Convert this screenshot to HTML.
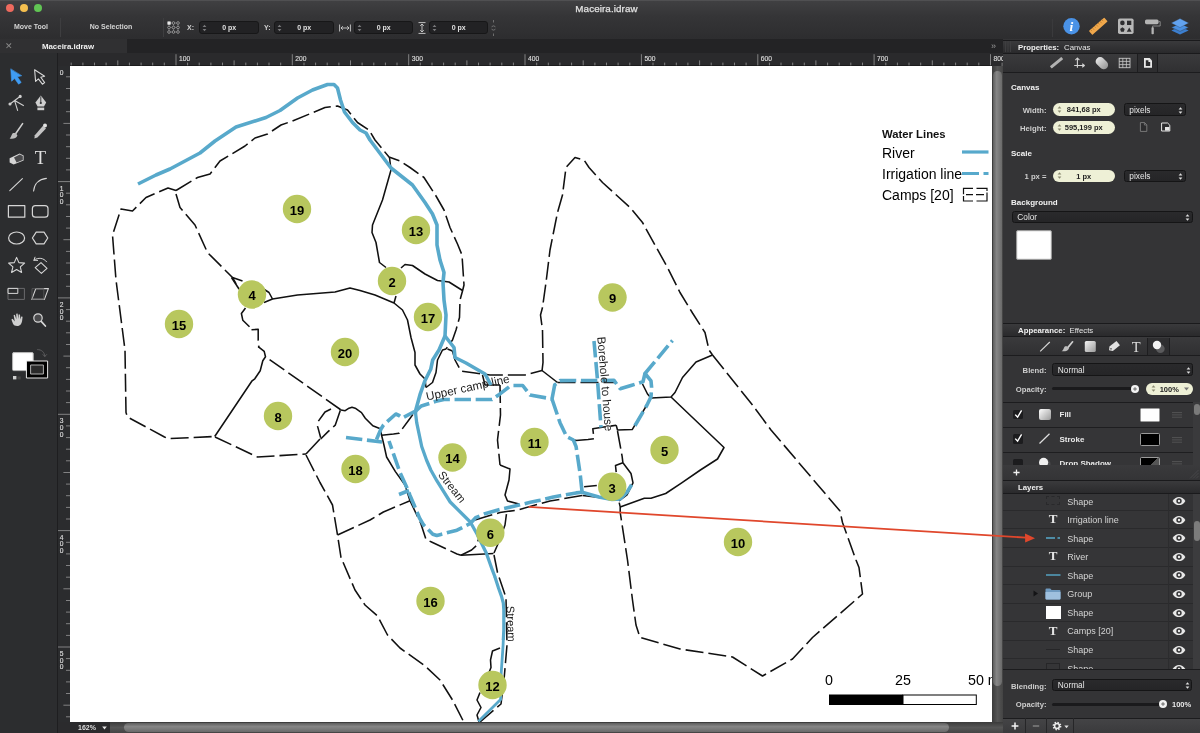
<!DOCTYPE html>
<html><head><meta charset="utf-8"><title>Maceira.idraw</title>
<style>
*{box-sizing:border-box;margin:0;padding:0}
html,body{width:1200px;height:733px;overflow:hidden;background:#2a2a2c}
body{font-family:"Liberation Sans",sans-serif;color:#e4e4e4;font-size:8px;position:relative}
.a{position:absolute}
#app{will-change:transform;position:absolute;left:0;top:0;width:1200px;height:733px;overflow:hidden;background:#2b2b2d}
/* title + toolbar */
#title{left:0;top:0;width:1200px;height:16px;background:linear-gradient(#404042,#353537);border-top:.6px solid #505052}
#title .t{left:0;width:1200px;top:2.3px;text-align:center;font-size:9.8px;color:#e2e2e2;letter-spacing:.1px;padding-left:13px;-webkit-text-stroke:.25px #e2e2e2}
.tl{width:8.6px;height:8.6px;border-radius:50%;top:2.9px}
#tool{left:0;top:16px;width:1200px;height:23px;background:linear-gradient(#353537,#2d2d2f)}
.tb{font-weight:bold;font-size:7px;color:#d4d4d4;top:7.2px;text-align:center;letter-spacing:0}
.sep{width:1px;background:#3e3e40;top:2px;height:19px}
.inp{top:5px;height:12.5px;width:59.5px;background:#222224;border-radius:3px;border:.5px solid #171718}
.inp span{position:absolute;left:0;right:0;top:2.2px;text-align:center;font-weight:bold;font-size:7px;color:#e0e0e0;padding-left:1px}
.inp svg{position:absolute;left:2.2px;top:2.3px}
.lbl{font-weight:bold;font-size:7px;color:#d0d0d0;top:7.5px}
#tabs{left:0;top:39px;width:1003px;height:14px;background:#232325}
#tab1{left:0;top:0;width:127px;height:14px;background:#303032}
#tab1 .x{left:5px;top:2.2px;font-size:9px;color:#8a8a8a}
#tab1 .n{left:0;width:136px;top:2.6px;text-align:center;font-weight:bold;font-size:7.9px;color:#f0f0f0}
/* left toolbar */
#left{left:0;top:53px;width:57px;height:680px;background:#2c2d2f}
/* rulers */
.hr{position:absolute;left:57px;top:53px;background:#2a2a2c}
.vr{position:absolute;left:57px;top:66px;background:#2b2c2e}
.hr text,.vr text{font-family:"Liberation Sans",sans-serif;font-size:13.4px;fill:#dcdcdc;stroke:#dcdcdc;stroke-width:.3}
#corner{left:57px;top:53px;width:13px;height:13px;background:#2a2a2c}
/* canvas */
#canvas{left:70px;top:66px;width:922px;height:656px;background:#fff;overflow:hidden;box-shadow:0 -.6px 0 #141414}
.map{position:absolute;left:0;top:0}
.map path{fill:none}
.bk path{stroke:#111;stroke-width:1.55;stroke-linejoin:round}
.bk .d{stroke-dasharray:18 5}
.bl path{stroke:#58a9cb;stroke-width:3.6;stroke-linejoin:round}
.bl .st{stroke-width:3.3}
.bl .st2{stroke-width:3.2}
.bl .st3{stroke-width:2.8}
.bl .i{stroke-dasharray:16.4 4.7}
.map text{font-family:"Liberation Sans",sans-serif;fill:#000}
.map .n{font-weight:bold;font-size:13px;text-anchor:middle}
.map .lb{fill:#1c1c1c}
.map .lt{font-size:11.3px;font-weight:bold;fill:#111}
.map .lg{font-size:14px}
.map .sc{font-size:14.3px}
/* scrollbars */
#vs{left:992px;top:66px;width:11px;height:656px;background:linear-gradient(90deg,#3a3a3a,#555 50%,#444)}
#vs i{position:absolute;left:1.2px;top:5px;width:9px;height:615px;border-radius:4.5px;background:linear-gradient(90deg,#5e5e5e,#868686 40%,#6a6a6a)}
#hs{left:70px;top:722px;width:933px;height:11px;background:linear-gradient(#3a3a3a,#555 50%,#444)}
#hs i{position:absolute;left:54px;top:1.2px;width:825px;height:9px;border-radius:4.5px;background:linear-gradient(#5e5e5e,#868686 40%,#6a6a6a)}
#zoom{left:70px;top:722px;width:40px;height:11px;background:#2b2b2d;font-size:7px;color:#ddd;font-weight:bold}
#zoom span{position:absolute;left:8px;top:1.5px}
/* right panel */
#right{left:1003px;top:39px;width:197px;height:694px;background:#2d2d2f}
.hd{left:0;width:197px;height:13px;background:linear-gradient(#3a3a3c,#2a2a2c);border-top:.5px solid #1a1a1c;border-bottom:.5px solid #1a1a1c}
.hd b{position:absolute;left:15px;top:2.3px;font-size:7.8px;color:#f0f0f0}
.hd span{position:absolute;top:2.3px;font-size:7.8px;color:#e6e6e6}
.ic{left:0;width:197px;height:19px;background:linear-gradient(#3a3a3c,#303032);border-bottom:.5px solid #1c1c1e}
.h2{font-weight:bold;font-size:8px;color:#f2f2f2}
.l{font-size:7.7px;font-weight:bold;color:#cdcdcd;text-align:right;width:43px}
.pill{height:12.5px;border-radius:6.5px;background:#eef0d6;color:#222;font-size:7.5px;text-align:center;font-weight:bold}
.pill span{position:absolute;left:0;right:0;top:2.2px}
.sel{height:12.5px;border-radius:2.5px;background:linear-gradient(#2a2a2c,#252527);border:.5px solid #151516;color:#e6e6e6;font-size:7.5px}
.sel span{position:absolute;left:4.8px;top:.9px;font-size:8.3px}
.row{left:0;width:186px;border-bottom:.5px solid #1e1e20;background:#2f2f31}
.ly{left:0;width:190px;height:18.6px;border-bottom:.6px solid #2a2a2c}
.ly span{position:absolute;left:64.2px;top:4.3px;font-size:9px;color:#d4d4d4}
.knob{width:8px;height:8px;border-radius:50%;background:radial-gradient(circle,#8a8a8a 0 1.4px,#f2f2f2 1.8px)}
</style></head>
<body>
<div id="app">
 <div id="title" class="a">
  <div class="a tl" style="left:5.5px;background:#ee6a5e"></div>
  <div class="a tl" style="left:19.5px;background:#f5bf4f"></div>
  <div class="a tl" style="left:33.5px;background:#61c554"></div>
  <div class="a t">Maceira.idraw</div>
 </div>
 <div id="tool" class="a">
  <div class="a tb" style="left:1px;width:60px">Move Tool</div>
  <div class="a sep" style="left:60px"></div>
  <div class="a tb" style="left:61px;width:100px">No Selection</div>
  <div class="a sep" style="left:163px"></div>
  <svg class="a" style="left:166.5px;top:4.5px" width="13" height="13" viewBox="0 0 13 13" fill="none" stroke="#c4c4c4" stroke-width=".6"><path d="M2 2H11V11H2ZM2 6.5H11M6.5 2V11" stroke="#7a7a7c"/><rect x=".8" y=".8" width="2.6" height="2.6" fill="#e8e8e8" stroke="#e8e8e8"/><circle cx="6.5" cy="2" r="1.35" fill="#303032"/><circle cx="11" cy="2" r="1.35" fill="#303032"/><circle cx="2" cy="6.5" r="1.35" fill="#303032"/><circle cx="6.5" cy="6.5" r="1.35" fill="#303032"/><circle cx="11" cy="6.5" r="1.35" fill="#303032"/><circle cx="2" cy="11" r="1.35" fill="#303032"/><circle cx="6.5" cy="11" r="1.35" fill="#303032"/><circle cx="11" cy="11" r="1.35" fill="#303032"/></svg>
<div class="a lbl" style="left:187px">X:</div>
<div class="a inp" style="left:199px"><svg width="5" height="8" viewBox="0 0 5 8"><path d="M.6 3L2.5 .8L4.4 3ZM.6 5L2.5 7.2L4.4 5Z" fill="#7a7a7c"/></svg><span>0 px</span></div>
<div class="a lbl" style="left:264px">Y:</div>
<div class="a inp" style="left:274px"><svg width="5" height="8" viewBox="0 0 5 8"><path d="M.6 3L2.5 .8L4.4 3ZM.6 5L2.5 7.2L4.4 5Z" fill="#7a7a7c"/></svg><span>0 px</span></div>
<svg class="a" style="left:338.5px;top:7.5px" width="12" height="8" viewBox="0 0 12 8" fill="none" stroke="#cfcfcf" stroke-width=".9"><path d="M.6 .5V7.5M11.4 .5V7.5M2 4H10M3.8 2.2L2 4L3.8 5.8M8.2 2.2L10 4L8.2 5.8"/></svg>
<div class="a inp" style="left:353.5px"><svg width="5" height="8" viewBox="0 0 5 8"><path d="M.6 3L2.5 .8L4.4 3ZM.6 5L2.5 7.2L4.4 5Z" fill="#7a7a7c"/></svg><span>0 px</span></div>
<svg class="a" style="left:418px;top:5.5px" width="8" height="12" viewBox="0 0 8 12" fill="none" stroke="#cfcfcf" stroke-width=".9"><path d="M.5 .6H7.5M.5 11.4H7.5M4 2V10M2.2 3.8L4 2L5.8 3.8M2.2 8.2L4 10L5.8 8.2"/></svg>
<div class="a inp" style="left:428.5px"><svg width="5" height="8" viewBox="0 0 5 8"><path d="M.6 3L2.5 .8L4.4 3ZM.6 5L2.5 7.2L4.4 5Z" fill="#7a7a7c"/></svg><span>0 px</span></div>
<svg class="a" style="left:490.5px;top:3.5px" width="5" height="16" viewBox="0 0 5 16" fill="none" stroke="#8a8a8a" stroke-width=".7"><path d="M2.5 0V2.5M2.5 13.5V16M.8 7.2C.8 5.4 4.2 5.4 4.2 7.2M.8 8.8C.8 10.6 4.2 10.6 4.2 8.8"/></svg>
<div class="a sep" style="left:1052px;top:3px;height:18px;background:#3a3a3c"></div>
<svg class="a" style="left:1060px;top:0" width="140" height="23" viewBox="1060 16 140 23">
<circle cx="1071.5" cy="26.3" r="8.2" fill="#4a92e6"/>
<text x="1071.3" y="31.2" text-anchor="middle" font-family="Liberation Serif,serif" font-style="italic" font-weight="bold" font-size="13.5" fill="#fff">i</text>
<g transform="translate(1098.3,26.2) rotate(-41.5)"><rect x="-10.2" y="-2.6" width="20.4" height="5.2" rx=".6" fill="#f0a84c"/><path d="M-8 -2.6V-.6M-5.5 -2.6V0M-3 -2.6V-.6M-.5 -2.6V0M2 -2.6V-.6M4.5 -2.6V0M7 -2.6V-.6" stroke="#c07a28" stroke-width=".7"/></g>
<rect x="1118" y="18.5" width="15.6" height="15.6" rx="1.8" fill="#b8b8b8"/>
<circle cx="1122.4" cy="22.9" r="2.3" fill="#2e2e30"/><rect x="1127" y="20.7" width="4.3" height="4.3" fill="#2e2e30"/>
<path d="M1122.4 27.2L1124.7 28.9L1123.8 31.7H1121L1120.1 28.9Z" fill="#2e2e30"/><path d="M1129.2 27.4L1131.6 31.7H1126.8Z" fill="#2e2e30"/>
<rect x="1145" y="19.4" width="13.6" height="4.8" rx="1.6" fill="#b4b4b4"/><path d="M1158.6 21.6H1160.2V26H1152.6V28" stroke="#8e8e8e" stroke-width=".9" fill="none"/><rect x="1151.5" y="27.2" width="2.3" height="7" rx=".8" fill="#b4b4b4"/>
<path d="M1180 26.6L1188.6 30.6L1180 34.6L1171.4 30.6Z" fill="#3c7fd0"/>
<path d="M1180 23.4L1188.6 27.4L1180 31.4L1171.4 27.4Z" fill="#4a90e2" stroke="#2f2f31" stroke-width=".4"/>
<path d="M1180 18.6L1188.8 23L1180 27.6L1171.2 23Z" fill="#62a2ee" stroke="#2f2f31" stroke-width=".3"/>
</svg>


 </div>
 <div id="tabs" class="a">
  <div id="tab1" class="a"><div class="a x">✕</div><div class="a n">Maceira.idraw</div></div>
  <div class="a" style="left:991px;top:1.5px;font-size:9px;color:#9a9a9a">»</div>
 </div>
 <div id="left" class="a">
 <svg class="a" style="left:0;top:0" width="57" height="680" viewBox="0 53 57 680" fill="none" stroke-linejoin="round" stroke-linecap="round">
<!-- row1 arrows -->
<path d="M10.8 69.2L11.6 81.2L14.6 78.6L18.6 84.2L21.2 82.4L17.4 76.8L21.4 75.8Z" fill="#3f9cf4" stroke="#3f9cf4" stroke-width=".6"/>
<path d="M34.6 69.8L35.6 81.4L38.4 78.8L42.4 84.2L44.6 82.6L40.8 77.2L44.6 76.2Z" fill="#2a2b2d" stroke="#d8d8d8" stroke-width="1.1"/>
<!-- row2 -->
<g stroke="#cfcfcf" stroke-width="1.1"><path d="M10 104L20 96.5M14.6 100.6L17.6 110.4M14.6 100.6L23.4 105.6"/><circle cx="10" cy="104" r="1" fill="#cfcfcf"/><circle cx="20.2" cy="96.4" r="1" fill="#cfcfcf"/></g>
<path d="M40.8 95.6L46.2 102.4L44 106.6H37.6L35.4 102.4Z" fill="#cfcfcf"/><path d="M40.8 96.8V102.2" stroke="#2a2b2d" stroke-width=".9"/><circle cx="40.8" cy="103" r="1.1" fill="#2a2b2d"/><rect x="37.4" y="107.6" width="6.8" height="2.6" fill="#cfcfcf"/>
<!-- row3 brush/pencil -->
<path d="M22.6 123.6L15.6 133.8" stroke="#cfcfcf" stroke-width="1.6"/><path d="M15.8 133L17.4 135.4C16.4 138.2 13 139.2 9.6 138.4C11.4 137.2 11.6 134 13 133Z" fill="#bdbdbd"/>
<path d="M43 125.8L46 128.4L37.4 137.6L34.4 138.6L34.8 135.2Z" fill="#c4c4c4"/><circle cx="45" cy="125.6" r="2" fill="#e2e2e2"/>
<!-- row4 eraser / T -->
<path d="M9.6 158.2L19.6 153.6L23.6 155.6V160.4L13.6 164.6L9.6 162.6Z" fill="#d6d6d6"/><path d="M14 157.6L19.8 154.6L22.8 156V160L16.6 162.6Z" fill="#4a4a4c"/>
<text x="40.4" y="164.2" text-anchor="middle" font-family="Liberation Serif,serif" font-size="18.5" fill="#e0e0e0" stroke="none">T</text>
<!-- row5 line / arc -->
<path d="M9.8 190.6L22.4 178.6" stroke="#d6d6d6" stroke-width="1.1"/>
<path d="M33.6 191C34.2 184 39 179.2 46.4 178.4" stroke="#d6d6d6" stroke-width="1.1"/>
<!-- row6 rect / rrect -->
<rect x="8.4" y="205.6" width="16.4" height="11.6" stroke="#d6d6d6" stroke-width="1.2"/>
<rect x="32.4" y="205.6" width="15.6" height="11.6" rx="3" stroke="#d6d6d6" stroke-width="1.2"/>
<!-- row7 ellipse / hexagon -->
<ellipse cx="16.6" cy="238" rx="8" ry="6" stroke="#d6d6d6" stroke-width="1.2"/>
<path d="M32.4 238L36.2 232.2H44L47.8 238L44 243.8H36.2Z" stroke="#d6d6d6" stroke-width="1.2"/>
<!-- row8 star / rotate -->
<path d="M16.6 257.4L18.9 262.6L24.6 263.1L20.3 266.9L21.6 272.4L16.6 269.5L11.6 272.4L12.9 266.9L8.6 263.1L14.3 262.6Z" stroke="#d6d6d6" stroke-width="1.1"/>
<path d="M35.2 267.6L41 262.6L47 268.4L41.4 273.4Z" stroke="#d6d6d6" stroke-width="1.1"/><path d="M34.2 260C38.4 257.2 43.6 257.8 46.6 261.8M34 260.2L37.6 260.4M34 260.2L35 257.2" stroke="#d6d6d6" stroke-width="1"/>
<!-- row9 -->
<rect x="8.4" y="288.4" width="16" height="11" stroke="#6a6a6c" stroke-width="1"/><rect x="8.4" y="288.4" width="9.4" height="5" stroke="#d6d6d6" stroke-width="1"/>
<path d="M31.8 299.4H44.4L48.4 288.6H35.8Z" stroke="#d6d6d6" stroke-width="1.1"/><rect x="32.4" y="288.6" width="11.4" height="10.8" stroke="#5a5a5c" stroke-width=".8"/>
<!-- row10 hand / zoom -->
<path d="M11.4 319.4L13 323.8C13.8 325.4 15 326 17.2 326C20.4 326 21.8 323.6 22.2 320.2L22.6 316.8L21.2 316.6L20.4 319.6L20 314.4L18.6 314.4L18.4 319L17.6 313.6L16.2 313.8L16.4 319.2L14.8 314.8L13.6 315.2L14.8 321.6L12.6 318.8Z" fill="#cfcfcf"/>
<circle cx="38" cy="318" r="4.2" stroke="#d6d6d6" stroke-width="1.2" fill="#4a4a4c"/><path d="M41.2 321.4L45.4 326" stroke="#d6d6d6" stroke-width="1.7"/>
<!-- colors -->
<rect x="12.6" y="352.6" width="20.6" height="18" rx="1" fill="#fff" stroke="#b9b9b9" stroke-width="1"/>
<rect x="26.8" y="361" width="20.8" height="17" fill="#000" stroke="#e6e6e6" stroke-width="1"/>
<rect x="31" y="365" width="12.4" height="9" fill="#2a2a2a" stroke="#b0b0b0" stroke-width="1"/>
<path d="M37.6 349.6C41.6 349.6 44.4 352 44.8 356M44.8 356.4L43 354.6M44.8 356.4L46.6 354.6" stroke="#5c5c5e" stroke-width="1"/>
<rect x="13" y="376" width="3.4" height="3.4" fill="#d0d0d0"/><rect x="17.4" y="376.4" width="3.4" height="3" fill="#444"/>
</svg>

 </div>
 <div id="corner" class="a"></div>
 <div class="a" style="left:56.6px;top:53px;width:.8px;height:680px;background:#1e1e20;z-index:2"></div>
 <svg class="hr" width="946" height="13" viewBox="57 53 946 13">
<path d="M176.0 54.2V66M292.3 54.2V66M408.7 54.2V66M525.0 54.2V66M641.4 54.2V66M757.8 54.2V66M874.1 54.2V66M990.5 54.2V66M117.8 60.4V66M234.1 60.4V66M350.5 60.4V66M466.9 60.4V66M583.2 60.4V66M699.6 60.4V66M815.9 60.4V66M932.3 60.4V66M71.2 62.6V66M82.9 62.6V66M94.5 62.6V66M106.1 62.6V66M129.4 62.6V66M141.1 62.6V66M152.7 62.6V66M164.3 62.6V66M187.6 62.6V66M199.2 62.6V66M210.9 62.6V66M222.5 62.6V66M245.8 62.6V66M257.4 62.6V66M269.0 62.6V66M280.7 62.6V66M304.0 62.6V66M315.6 62.6V66M327.2 62.6V66M338.9 62.6V66M362.1 62.6V66M373.8 62.6V66M385.4 62.6V66M397.0 62.6V66M420.3 62.6V66M432.0 62.6V66M443.6 62.6V66M455.2 62.6V66M478.5 62.6V66M490.1 62.6V66M501.8 62.6V66M513.4 62.6V66M536.7 62.6V66M548.3 62.6V66M559.9 62.6V66M571.6 62.6V66M594.9 62.6V66M606.5 62.6V66M618.1 62.6V66M629.8 62.6V66M653.0 62.6V66M664.7 62.6V66M676.3 62.6V66M687.9 62.6V66M711.2 62.6V66M722.9 62.6V66M734.5 62.6V66M746.1 62.6V66M769.4 62.6V66M781.0 62.6V66M792.7 62.6V66M804.3 62.6V66M827.6 62.6V66M839.2 62.6V66M850.8 62.6V66M862.5 62.6V66M885.8 62.6V66M897.4 62.6V66M909.0 62.6V66M920.7 62.6V66M943.9 62.6V66M955.6 62.6V66M967.2 62.6V66M978.8 62.6V66M1002.1 62.6V66" stroke="#a8a8a8" stroke-width="0.7" fill="none"/>
<text transform="translate(179.0,60.5) scale(.5)">100</text>
<text transform="translate(295.3,60.5) scale(.5)">200</text>
<text transform="translate(411.7,60.5) scale(.5)">300</text>
<text transform="translate(528.0,60.5) scale(.5)">400</text>
<text transform="translate(644.4,60.5) scale(.5)">500</text>
<text transform="translate(760.8,60.5) scale(.5)">600</text>
<text transform="translate(877.1,60.5) scale(.5)">700</text>
<text transform="translate(993.5,60.5) scale(.5)">800</text>
</svg>
 <svg class="vr" width="13" height="656" viewBox="57 66 13 656">
<path d="M66 76.8H70M66 88.5H70M66 100.1H70M66 111.7H70M63.4 123.4H70M66 135.0H70M66 146.7H70M66 158.3H70M66 169.9H70M57 181.6H70M66 193.2H70M66 204.8H70M66 216.5H70M66 228.1H70M63.4 239.7H70M66 251.4H70M66 263.0H70M66 274.6H70M66 286.3H70M57 297.9H70M66 309.6H70M66 321.2H70M66 332.8H70M66 344.5H70M63.4 356.1H70M66 367.7H70M66 379.4H70M66 391.0H70M66 402.6H70M57 414.3H70M66 425.9H70M66 437.6H70M66 449.2H70M66 460.8H70M63.4 472.5H70M66 484.1H70M66 495.7H70M66 507.4H70M66 519.0H70M57 530.6H70M66 542.3H70M66 553.9H70M66 565.5H70M66 577.2H70M63.4 588.8H70M66 600.5H70M66 612.1H70M66 623.7H70M66 635.4H70M57 647.0H70M66 658.6H70M66 670.3H70M66 681.9H70M66 693.5H70M63.4 705.2H70M66 716.8H70" stroke="#a8a8a8" stroke-width="0.7" fill="none"/>
<text transform="translate(61.6,75.0) scale(.5)" text-anchor="middle">0</text>
<text transform="translate(61.6,190.6) scale(.5)" text-anchor="middle">1</text>
<text transform="translate(61.6,197.2) scale(.5)" text-anchor="middle">0</text>
<text transform="translate(61.6,203.8) scale(.5)" text-anchor="middle">0</text>
<text transform="translate(61.6,306.9) scale(.5)" text-anchor="middle">2</text>
<text transform="translate(61.6,313.5) scale(.5)" text-anchor="middle">0</text>
<text transform="translate(61.6,320.1) scale(.5)" text-anchor="middle">0</text>
<text transform="translate(61.6,423.3) scale(.5)" text-anchor="middle">3</text>
<text transform="translate(61.6,429.9) scale(.5)" text-anchor="middle">0</text>
<text transform="translate(61.6,436.5) scale(.5)" text-anchor="middle">0</text>
<text transform="translate(61.6,539.6) scale(.5)" text-anchor="middle">4</text>
<text transform="translate(61.6,546.2) scale(.5)" text-anchor="middle">0</text>
<text transform="translate(61.6,552.8) scale(.5)" text-anchor="middle">0</text>
<text transform="translate(61.6,656.0) scale(.5)" text-anchor="middle">5</text>
<text transform="translate(61.6,662.6) scale(.5)" text-anchor="middle">0</text>
<text transform="translate(61.6,669.2) scale(.5)" text-anchor="middle">0</text>
</svg>
 <div id="canvas" class="a">
 <svg class="map" width="922" height="656" viewBox="70 66 922 656">
<g class="bk">
<path class="s" d="M232.5 277.5 L242.5 281"/>
<path class="s" d="M262 288 L269 292.5 L272.5 299"/>
<path class="s" d="M264 302.5 L272.5 299 L297.5 295 L335 292 L350 288 L360 290.5 L375 295 L394 303 L402.5 310 L407.5 320 L411 337.5 L415 352.5 L415 365 L420 374 L425 379 L426 387.5"/>
<path class="s" d="M394 303 L396 296"/>
<path class="s" d="M214.7 436.5 L252.1 380.8 L254.8 378.8 L260.2 370.7 L262.8 360.7 L265.5 356.7 L264.2 351.4 L258.2 346.7"/>
<path class="s" d="M245.5 308 L241.4 313.5 L242.8 320.2 L249.5 326.8"/>
<path class="s" d="M231.5 277.5 L239 289"/>
<path class="s" d="M339.5 409.8 L345.2 410.7 L349 408.2 L352 407.3 L355.2 408.2 L361.5 412.6 L365.3 418.2 L372.8 425.8 L380.3 428.7 L381.6 435.2 L384 445.2 L386.6 457 L395.4 471.6 L405 485 L410 500.7"/>
<path class="s" d="M306 454 L320 439"/>
<path class="s" d="M389.5 157.5 L391 170 L382.5 200 L372.5 225 L372 232.5 L376 242.5 L379.5 262.5 L386 267.5"/>
<path class="s" d="M401 268 L405 264.5 L412.5 265.5 L425 274 L437.5 280.5 L449 282 L462.5 290.5"/>
<path class="s" d="M446 349 L442.5 350 L437.5 360 L436 372.5 L432.5 382.5 L426 387.5"/>
<path class="s" d="M447.5 349 L452.5 351"/>
<path class="s" d="M482.5 375 L485 385 L500 385"/>
<path class="s" d="M542 370.5 L557.5 382.5"/>
<path class="s" d="M500 465 L510 469 L509 480 L505 495 L507.5 501 L519 504"/>
<path class="s" d="M461 555.3 L493.5 553.5"/>
<path class="s" d="M500 648 L492.5 651 L490.5 660 L491 667.5 L489 672.5"/>
<path class="s" d="M480 692.5 L477 700 L481 707.5 L477 715 L479 722"/>
<path class="s" d="M712.5 355 L696 362 L682.5 377.5 L675 392.5 L671 397 L651 398"/>
<path class="s" d="M671 397 L724 447.5 L717.5 459 L700.4 470 L681.7 482.8 L665.7 493.5 L651 498.2 L644.3 498.2 L620.2 506.9"/>
<path class="s" d="M642.5 384 L647.5 394 L651 398 L632.2 429.6 L617.5 430 L616.2 425.3"/>
<path class="s" d="M571 439 L576 440.5"/>
<path class="s" d="M622.9 462.8 L615.5 465.5 L616.2 472.1"/>
<path class="s" d="M622.9 462.8 L631 473.5 L633 482.8 L627 494.9 L618.9 500.9"/>
<path class="s" d="M584.1 486.8 L596.8 485.5"/>
<path class="s" d="M582.5 495.5 L600 497.5"/>
<path class="d" d="M176 190.5 L197.5 177.5 L210 174 L220 161 L245 146 L255 138 L267.5 134 L281 125 L292.5 121 L325 107.5 L337.5 106 L347.5 110 L357.5 122.5 L369 130 L375 140 L389 157 L400 161 L410 167.5 L424 177.5 L436 196 L444 210 L450 227.5 L457.5 244 L462 255 L464 285 L462.5 291 L460 300 L459.5 317.5 L456 330 L452.5 340 L446 349"/>
<path class="d" d="M176 190.5 L168 188 L146 197.5 L132.5 211 L121 209 L112.5 235 L116 280 L125 350 L126 412.5 L127.5 417 L164.5 437 L168 438.6 L214.7 436.5"/>
<path class="d" d="M176 194 L180 207.5 L195 225 L207.5 252.5 L232.5 277.5 L239 289"/>
<path class="d" d="M251.5 329.8 L258.2 329.3 L258.2 340.2 L258.8 347.6"/>
<path class="d" d="M265.5 356.7 L340.4 409.5" stroke-dashoffset="18"/>
<path class="d" d="M215 437 L257.5 457 L306 454"/>
<path class="d" d="M331 409 L325 412 L318.2 421.4 L317.6 426.4 L320.7 437.7"/>
<path class="d" d="M340.2 410.7 L335.2 425.2 L328.3 431.4 L320.7 439"/>
<path class="d" d="M306 455 L320 482.5 L332.5 505 L337.5 535 L341 557.5 L355 590 L365 605 L377.5 616 L387.5 635 L400 648 L425 666 L440 680 L452.5 700 L464 722.5"/>
<path class="d" d="M337.5 535 L370 520 L383.4 512 L410 500.7"/>
<path class="d" d="M381.6 435.2 L393.5 434 L399 433.3 L409.2 419.5 L415.5 411"/>
<path class="d" d="M410 500.7 L420.8 523.5 L426 539.5 L431.5 542 L457 554 L461 555.3"/>
<path class="d" d="M461 555.3 L471.6 550 L477 545 L478.3 539.5"/>
<path class="d" d="M494 553 L497.5 545 L505 525 L507 510"/>
<path class="d" d="M494 555 L497.5 572.5 L506 597.5 L507 645 L504 680 L501 704 L480 722"/>
<path class="d" d="M475 520 L500 512.5 L517.5 510 L550 501 L582.5 495.5"/>
<path class="d" d="M452.5 351 L455 360 L461 371 L475 373 L490 375 L525 375 L542 370.5"/>
<path class="d" d="M500 385 L500.5 415 L497.5 440 L500 465"/>
<path class="d" d="M557.5 382.5 L615 382.5"/>
<path class="d" d="M576 440.5 L588 439.4 L594 438.7 L592.8 428.7 L616.2 425.3"/>
<path class="d" d="M617.5 431 L622.2 456.8 L622.9 462.8"/>
<path class="d" d="M542 371 L543 362.5 L542.5 330 L540.5 315 L542.5 307.5 L546 282.5 L550 250 L555 225 L557.5 212.5 L562.5 195 L566 167.5 L575 157.5 L584 160 L589 167.5 L602.5 182.5 L630 207.5 L642.5 222.5 L655 245 L667.5 267.5 L680 292.5 L692.5 313 L705 332.5 L709 350 L712.5 355"/>
<path class="d" d="M712.5 355 L752.5 405 L771 430 L840 511 L842.5 522.5 L856 560 L859 567.5 L862.5 594 L812.5 637.5 L792.5 659 L762.5 676 L732.5 657 L680 649 L640 637.5 L636 625 L632.5 600 L627.5 560 L620.2 512.5 L620.2 506.9 L618.9 501.5"/>
</g>
<g class="bl">
<path class="r" d="M138 184 L156 175 L170 169 L200 153 L215 141 L236 127 L266 117.5 L280 110.5 L297.5 98 L312.5 90 L327.5 84.5 L334 84.5 L337.5 88 L340.5 100 L344.5 112 L352.5 122.5 L360 130 L366 133 L370 140 L391 168 L412.5 185 L425 202.5 L432.5 214 L437 225 L437 245 L440 260 L444 272.5 L443 282.5 L444 300 L446 315 L445 336"/>
<path class="r" d="M445 336 L439 350 L432.7 360 L430.7 369.3 L424.7 381.3 L420 394.7 L416 409.3 L415.3 413.3"/>
<path class="r" d="M445 336 L454 347.5 L455 357.5 L466 363 L485 374 L491 385"/>
<path class="st" d="M415.3 411 L416.7 422.6 L421.7 446.5 L426.5 460 L430.8 470 L436.8 480.7 L450.2 502 L470.3 522 L477 534 L486.3 553 L491.6 568 L495 577"/>
<path class="st2" d="M494.8 576.5 L498.5 588 L501.5 596.4 L503.3 603 L503.8 610 L503.8 630 L503.3 640"/>
<path class="st3" d="M503.4 638 L503.1 645 L501.2 673 L500.6 699.6 L478.4 721.4"/>
<path class="i" d="M415.3 411.3 L421.3 406 L436 401.3 L444 399.5 L492 399.5 L499.3 394.4 L509.3 386.7 L513.3 385.5 L522.7 385.5 L530 395 L550.7 398.7 L552 399"/>
<path class="i" d="M552 399 L554.7 384.8 L557.4 383.2 L560 380.6 L614 380.4 L620.2 388.8 L631 385.5 L643 381.7 L645 373.5"/>
<path class="i" d="M644.2 374.5 L672.5 340.5"/>
<path class="i" d="M645 373.5 L651 380.8 L651.6 387.5 L651 396.8 L647 405 L633.6 428"/>
<path class="i" d="M552 399 L560 422.7 L566.7 436.7 L573.4 440 L576.1 446.7 L580.1 473.5 L582.1 492.3"/>
<path class="i" d="M582.1 492.3 L576.1 492.9 L553.4 496.9 L540 500.2 L530.4 502.3 L517 505.6 L497 510.2 L485 513.7 L475.6 517.7 L470.3 523.5 L457 530.2 L440.8 534.4 L436.8 535.5 L432.8 534.2 L423.5 524.8 L419.5 518 L414 504.8 L410 495.4 L407.4 488.7 L400 472.5 L389 441"/>
<path class="i" d="M346 437.5 L382 442"/>
<path class="i" d="M376.5 439.5 L381 429 L383.5 425 L395.8 414 L399 415.5 L402.5 418 L415.5 411"/>
<path class="i" d="M399 494.5 L409 490.5"/>
<path class="i" d="M594 341 L597.5 380 L601 427.5"/>
<path class="r" d="M582.1 492.3 L598.8 496.9 L612 499.5 L620.2 498.9 L627 492.2 L631.6 484.8"/>
</g>
<circle cx="297" cy="209" r="14.2" fill="#b8c75e"/>
<text class="n" x="297" y="214.7">19</text>
<circle cx="416" cy="230" r="14.2" fill="#b8c75e"/>
<text class="n" x="416" y="235.7">13</text>
<circle cx="392" cy="281" r="14.2" fill="#b8c75e"/>
<text class="n" x="392" y="286.7">2</text>
<circle cx="252" cy="294.5" r="14.2" fill="#b8c75e"/>
<text class="n" x="252" y="300.2">4</text>
<circle cx="179" cy="324" r="14.2" fill="#b8c75e"/>
<text class="n" x="179" y="329.7">15</text>
<circle cx="345" cy="352" r="14.2" fill="#b8c75e"/>
<text class="n" x="345" y="357.7">20</text>
<circle cx="428" cy="317" r="14.2" fill="#b8c75e"/>
<text class="n" x="428" y="322.7">17</text>
<circle cx="612.5" cy="297.5" r="14.2" fill="#b8c75e"/>
<text class="n" x="612.5" y="303.2">9</text>
<circle cx="278" cy="416" r="14.2" fill="#b8c75e"/>
<text class="n" x="278" y="421.7">8</text>
<circle cx="355.5" cy="469" r="14.2" fill="#b8c75e"/>
<text class="n" x="355.5" y="474.7">18</text>
<circle cx="452.5" cy="457.5" r="14.2" fill="#b8c75e"/>
<text class="n" x="452.5" y="463.2">14</text>
<circle cx="534.5" cy="442" r="14.2" fill="#b8c75e"/>
<text class="n" x="534.5" y="447.7">11</text>
<circle cx="664.5" cy="450" r="14.2" fill="#b8c75e"/>
<text class="n" x="664.5" y="455.7">5</text>
<circle cx="612.2" cy="486.8" r="14.2" fill="#b8c75e"/>
<text class="n" x="612.2" y="492.5">3</text>
<circle cx="490.3" cy="532.8" r="14.2" fill="#b8c75e"/>
<text class="n" x="490.3" y="538.5">6</text>
<circle cx="738" cy="542" r="14.2" fill="#b8c75e"/>
<text class="n" x="738" y="547.7">10</text>
<circle cx="430.5" cy="601" r="14.2" fill="#b8c75e"/>
<text class="n" x="430.5" y="606.7">16</text>
<circle cx="492.5" cy="685" r="14.2" fill="#b8c75e"/>
<text class="n" x="492.5" y="690.7">12</text>
<text class="lb" transform="translate(427,400.5) rotate(-12.3)" font-size="11.7">Upper camp line</text>
<text class="lb" transform="translate(437.6,475) rotate(51.5)" font-size="11.3">Stream</text>
<text class="lb" transform="translate(506.6,606) rotate(88)" font-size="11.1">Stream</text>
<text class="lb" transform="translate(597.3,337) rotate(85.3)" font-size="11.7">Borehole to house</text>
<text class="lt" x="882" y="137.5">Water Lines</text>
<text class="lg" x="882" y="157.5">River</text>
<text class="lg" x="882" y="178.5">Irrigation line</text>
<text class="lg" x="882" y="200">Camps [20]</text>
<path d="M962 152H988.5" stroke="#57a9cc" stroke-width="3.2" fill="none"/>
<path d="M962 173.5H979M983.5 173.5H988.5" stroke="#57a9cc" stroke-width="3.2" fill="none"/>
<path d="M973 188.3H963.5V194.3M976.5 188.3H987V191M963.5 196V201H973M976.5 201H987V192.5M966 194.7H973M976 194.7H984" stroke="#111" stroke-width="1.2" fill="none"/>
<rect x="829" y="694.5" width="74" height="10.5" fill="#000"/>
<rect x="903" y="695" width="73.3" height="9.5" fill="#fff" stroke="#000" stroke-width="1"/>
<text class="sc" x="829" y="685" text-anchor="middle">0</text>
<text class="sc" x="903" y="685" text-anchor="middle">25</text>
<text class="sc" x="968" y="685">50 m</text>
</svg>
 </div>
 <div id="vs" class="a"><i></i></div>
 <div id="hs" class="a"><i></i></div>
 <div id="zoom" class="a"><span>162%</span><svg class="a" style="left:32px;top:4.2px" width="5" height="4" viewBox="0 0 5 4"><path d="M.2 .4H4.8L2.5 3.4Z" fill="#e6e6e6"/></svg></div>
 <div id="right" class="a">
 
 </div>
 <div class="a" style="left:1003px;top:39px;width:197px;height:694px;background:#343436"></div>
<div class="a hd" style="left:1003px;top:39.5px;width:197px;height:14px"><b>Properties:</b><span style="left:61px">Canvas</span></div>
<svg class="a" style="left:1004px;top:41px" width="9" height="11" viewBox="0 0 9 11"><path d="M1.5 0V11M4 0V11M6.5 0V11" stroke="#3e3e40" stroke-width="1"/></svg>
<div class="a ic" style="left:1003px;top:53.5px;height:19px"></div>
<div class="a" style="left:1136.5px;top:54.2px;width:21.5px;height:17.8px;background:#2e2e30;border-left:.7px solid #1e1e20;border-right:.7px solid #1e1e20"></div>
<svg class="a" style="left:1040px;top:53px" width="130" height="20" viewBox="1040 53 130 20">
<g transform="translate(1056.5,62.7) rotate(-39)"><rect x="-7.4" y="-1.5" width="14.8" height="3" rx=".5" fill="#b2b2b2"/></g>
<g stroke="#d4d4d4" stroke-width="1.1" fill="none"><path d="M1077.4 58.4V67.8M1074.2 65.5H1084"/><path d="M1075.4 60.2L1077.4 58L1079.4 60.2M1082.2 63.7L1084.4 65.5L1082.2 67.3" stroke-linejoin="round"/></g>
<defs><linearGradient id="gb" x1="0" y1="0" x2="1" y2="1"><stop offset="0" stop-color="#f0f0f0"/><stop offset="1" stop-color="#8c8c8c"/></linearGradient></defs>
<path d="M1097 58.4A4.4 4.4 0 0 1 1103.2 58.2L1107 62A4.4 4.4 0 0 1 1106.6 68.2A4.4 4.4 0 0 1 1100.4 67.8L1096.6 64A4.4 4.4 0 0 1 1097 58.4Z" fill="url(#gb)"/>
<rect x="1119.2" y="58.3" width="10.8" height="9.4" fill="#3a3a3c" stroke="#c8c8c8" stroke-width=".9"/><path d="M1119.2 61.4H1130M1119.2 64.6H1130M1122.8 58.3V67.7M1126.4 58.3V67.7" stroke="#c8c8c8" stroke-width=".8"/>
<path d="M1144 58H1149.6L1152 60.4V67.8H1144Z" fill="#e8e8e8"/><path d="M1145.8 60.2H1148.4V62H1150.2V66H1145.8Z" fill="#2c2c2e"/>
</svg>

<div class="a h2" style="left:1011px;top:82.5px">Canvas</div>
<div class="a l" style="left:986.5px;top:105.5px;width:60px">Width:</div>
<div class="a pill" style="left:1052.5px;top:103px;width:62.5px"><svg class="a" style="left:4.5px;top:1.8px" width="5" height="9" viewBox="0 0 5 9"><path d="M.6 3.6L2.5 1.2L4.4 3.6ZM.6 5.4L2.5 7.8L4.4 5.4Z" fill="#8a8a70"/></svg><span>841,68 px</span></div>
<div class="a sel" style="left:1123.5px;top:103px;width:62px"><span>pixels</span><svg class="a" style="left:53.5px;top:1.5px" width="5" height="9" viewBox="0 0 5 9"><path d="M.6 3.6L2.5 1.2L4.4 3.6ZM.6 5.4L2.5 7.8L4.4 5.4Z" fill="#e0e0e0"/></svg></div>
<div class="a l" style="left:986.5px;top:123.5px;width:60px">Height:</div>
<div class="a pill" style="left:1052.5px;top:121px;width:62.5px"><svg class="a" style="left:4.5px;top:1.8px" width="5" height="9" viewBox="0 0 5 9"><path d="M.6 3.6L2.5 1.2L4.4 3.6ZM.6 5.4L2.5 7.8L4.4 5.4Z" fill="#8a8a70"/></svg><span>595,199 px</span></div>
<svg class="a" style="left:1136px;top:120px" width="40" height="14" viewBox="1136 120 40 14">
<path d="M1140.4 122.6H1144.6L1146.8 124.8V131.4H1140.4Z" fill="#2c2c2e" stroke="#8a8a8a" stroke-width=".8"/><path d="M1144.4 122.8V125H1146.6" stroke="#8a8a8a" stroke-width=".7" fill="none"/>
<path d="M1161.6 123H1167.6L1169.8 125.2V131H1161.6Z" fill="#2c2c2e" stroke="#e6e6e6" stroke-width="1"/><path d="M1165 127H1169.4V130.6H1165Z" fill="#e6e6e6"/>
</svg>

<div class="a h2" style="left:1011px;top:149px">Scale</div>
<div class="a l" style="left:986.5px;top:172px;width:60px">1 px =</div>
<div class="a pill" style="left:1052.5px;top:169.5px;width:62.5px"><svg class="a" style="left:4.5px;top:1.8px" width="5" height="9" viewBox="0 0 5 9"><path d="M.6 3.6L2.5 1.2L4.4 3.6ZM.6 5.4L2.5 7.8L4.4 5.4Z" fill="#8a8a70"/></svg><span>1 px</span></div>
<div class="a sel" style="left:1123.5px;top:169.5px;width:62px"><span>pixels</span><svg class="a" style="left:53.5px;top:1.5px" width="5" height="9" viewBox="0 0 5 9"><path d="M.6 3.6L2.5 1.2L4.4 3.6ZM.6 5.4L2.5 7.8L4.4 5.4Z" fill="#e0e0e0"/></svg></div>
<div class="a h2" style="left:1011px;top:197.5px">Background</div>
<div class="a sel" style="left:1011.5px;top:210.5px;width:181px"><span>Color</span><svg class="a" style="left:172.5px;top:1.5px" width="5" height="9" viewBox="0 0 5 9"><path d="M.6 3.6L2.5 1.2L4.4 3.6ZM.6 5.4L2.5 7.8L4.4 5.4Z" fill="#e0e0e0"/></svg></div>
<div class="a" style="left:1015.5px;top:230px;width:36.5px;height:29.5px;background:#fff;border:1px solid #9a9a9a;border-radius:2px;box-shadow:inset 0 0 0 .5px #ddd"></div>
<div class="a hd" style="left:1003px;top:322.5px;width:197px;height:14.5px"><b>Appearance:</b><span style="left:66.5px">Effects</span></div>
<div class="a ic" style="left:1003px;top:337px;height:18.5px"></div>
<div class="a" style="left:1147px;top:337.6px;width:22.5px;height:17.6px;background:#2e2e30;border-left:.7px solid #1e1e20;border-right:.7px solid #1e1e20"></div>
<svg class="a" style="left:1030px;top:336px" width="150" height="20" viewBox="1030 336 150 20">
<defs><linearGradient id="gs" x1="0" y1="0" x2="1" y2="1"><stop offset="0" stop-color="#f4f4f4"/><stop offset="1" stop-color="#9a9a9a"/></linearGradient></defs>
<path d="M1040.2 351.4L1049.8 342" stroke="#d8d8d8" stroke-width="1.1"/>
<path d="M1072.6 341.8L1067.8 347.6" stroke="#cfcfcf" stroke-width="1.7" stroke-linecap="round"/><path d="M1067 346.2L1069 348.2C1068 350.8 1065 351.8 1061.6 351.2C1063.6 350 1063.8 347.4 1065 346.2Z" fill="#bdbdbd"/>
<rect x="1084.8" y="341" width="11" height="11" rx="1.6" fill="url(#gs)"/>
<g transform="translate(1113.8,346.6) rotate(-38)"><path d="M-5.6 -2.8H3.4L6 0L3.4 2.8H-5.6Z" fill="#e0e0e0" transform="scale(-1,1)"/><circle cx="-3.6" cy="0" r=".8" fill="#4a4a4c"/></g>
<text x="1136.3" y="351.6" text-anchor="middle" font-family="Liberation Serif,serif" font-size="14.5" fill="#dcdcdc">T</text>
<circle cx="1160.4" cy="348.8" r="4.3" fill="#5a5a5c"/><circle cx="1157" cy="345" r="4.2" fill="#f2f2f2"/><path d="M1160.4 344.5A4.3 4.3 0 0 0 1156.2 349.1A4.2 4.2 0 0 0 1160.4 344.5Z" fill="#9a9a9a" opacity=".0"/>
</svg>

<div class="a l" style="left:986.5px;top:366px;width:60px">Blend:</div>
<div class="a sel" style="left:1052px;top:363px;width:141px"><span>Normal</span><svg class="a" style="left:132.5px;top:1.5px" width="5" height="9" viewBox="0 0 5 9"><path d="M.6 3.6L2.5 1.2L4.4 3.6ZM.6 5.4L2.5 7.8L4.4 5.4Z" fill="#e0e0e0"/></svg></div>
<div class="a l" style="left:986.5px;top:384.5px;width:60px">Opacity:</div>
<div class="a" style="left:1052px;top:387px;width:82px;height:3px;border-radius:1.5px;background:#1a1a1c"></div>
<div class="a knob" style="left:1130.5px;top:384.5px"></div>
<div class="a pill" style="left:1146px;top:382.5px;width:46.5px"><svg class="a" style="left:4.5px;top:1.8px" width="5" height="9" viewBox="0 0 5 9"><path d="M.6 3.6L2.5 1.2L4.4 3.6ZM.6 5.4L2.5 7.8L4.4 5.4Z" fill="#8a8a70"/></svg><span>100%</span><svg class="a" style="right:4px;top:4.5px" width="5" height="4" viewBox="0 0 5 4"><path d="M0 .5H5L2.5 3.5Z" fill="#777"/></svg></div>
<div class="a" style="left:1003px;top:402px;width:190px;height:63px;background:#353537;border-top:.5px solid #1c1c1e"></div>
<div class="a" style="left:1003px;top:426.5px;width:190px;height:.7px;background:#1e1e20"></div>
<div class="a" style="left:1003px;top:451.5px;width:190px;height:.7px;background:#1e1e20"></div>
<div class="a" style="left:1013px;top:409.5px;width:9.5px;height:9.5px;background:#1c1c1e;border-radius:1.5px"></div>
<svg class="a" style="left:1013px;top:407.5px" width="12" height="12" viewBox="0 0 12 12"><path d="M2.2 6.6L4.6 9.2L8.6 2.4" stroke="#fff" stroke-width="1.4" fill="none"/></svg>
<div class="a" style="left:1059.5px;top:410.0px;font-weight:bold;font-size:8px;color:#eaeaea">Fill</div>
<div class="a" style="left:1139.5px;top:408.0px;width:20.5px;height:13.5px;background:#fff;border:1px solid #9a9a9a;border-radius:1.5px"></div>
<svg class="a" style="left:1172px;top:412.0px" width="10" height="6" viewBox="0 0 10 6"><path d="M0 .6H10M0 2.9H10M0 5.2H10" stroke="#5a5a5c" stroke-width=".8"/></svg>
<div class="a" style="left:1013px;top:434px;width:9.5px;height:9.5px;background:#1c1c1e;border-radius:1.5px"></div>
<svg class="a" style="left:1013px;top:432px" width="12" height="12" viewBox="0 0 12 12"><path d="M2.2 6.6L4.6 9.2L8.6 2.4" stroke="#fff" stroke-width="1.4" fill="none"/></svg>
<div class="a" style="left:1059.5px;top:434.5px;font-weight:bold;font-size:8px;color:#eaeaea">Stroke</div>
<div class="a" style="left:1139.5px;top:432.5px;width:20.5px;height:13.5px;background:#000;border:1px solid #9a9a9a;border-radius:1.5px"></div>
<svg class="a" style="left:1172px;top:436.5px" width="10" height="6" viewBox="0 0 10 6"><path d="M0 .6H10M0 2.9H10M0 5.2H10" stroke="#5a5a5c" stroke-width=".8"/></svg>
<div class="a" style="left:1013px;top:458.5px;width:9.5px;height:9.5px;background:#1c1c1e;border-radius:1.5px"></div>
<div class="a" style="left:1059.5px;top:459.0px;font-weight:bold;font-size:8px;color:#eaeaea">Drop Shadow</div>
<div class="a" style="left:1139.5px;top:457.0px;width:20.5px;height:13.5px;background:linear-gradient(135deg,#000 55%,#555 56%);border:1px solid #9a9a9a;border-radius:1.5px"></div>
<svg class="a" style="left:1172px;top:461.0px" width="10" height="6" viewBox="0 0 10 6"><path d="M0 .6H10M0 2.9H10M0 5.2H10" stroke="#5a5a5c" stroke-width=".8"/></svg>
<div class="a" style="left:1039px;top:408.5px;width:11.5px;height:11.5px;border-radius:2px;background:linear-gradient(135deg,#fff,#9a9a9a)"></div>
<svg class="a" style="left:1038px;top:432px" width="13" height="13" viewBox="0 0 13 13"><path d="M1.5 11.5L11.5 1.8" stroke="#e0e0e0" stroke-width="1.2"/></svg>
<svg class="a" style="left:1038px;top:456px" width="14" height="14" viewBox="0 0 14 14"><circle cx="8" cy="8" r="4.6" fill="#4a4a4c"/><circle cx="5.6" cy="6.4" r="4.6" fill="#f0f0f0"/></svg>
<div class="a" style="left:1193px;top:402px;width:7px;height:63px;background:#3a3a3c"></div>
<div class="a" style="left:1193.5px;top:404px;width:6px;height:11px;border-radius:3px;background:#7a7a7a"></div>
<div class="a" style="left:1003px;top:464.8px;width:197px;height:15.2px;background:linear-gradient(#3a3a3c,#343436)"></div>
<svg class="a" style="left:1013px;top:469px" width="7" height="7" viewBox="0 0 7 7"><path d="M3.5 .4V6.6M.4 3.5H6.6" stroke="#f0f0f0" stroke-width="1.3"/></svg>
<svg class="a" style="left:1189px;top:469px" width="10" height="10" viewBox="0 0 10 10"><path d="M1 9.5L9.5 1M4 9.5L9.5 4M7 9.5L9.5 7" stroke="#4e4e50" stroke-width=".7"/></svg>
<div class="a hd" style="left:1003px;top:480px;width:197px;height:13.5px"><b>Layers</b></div>
<div class="a" style="left:1003px;top:493.5px;width:197px;height:175px;background:#353537;overflow:hidden">
<div class="a ly" style="top:-1.30px"><span>Shape</span></div>
<div class="a ly" style="top:17.27px"><span>Irrigation line</span></div>
<div class="a ly" style="top:35.84px"><span>Shape</span></div>
<div class="a ly" style="top:54.41px"><span>River</span></div>
<div class="a ly" style="top:72.98px"><span>Shape</span></div>
<div class="a ly" style="top:91.55px"><span>Group</span></div>
<div class="a ly" style="top:110.12px"><span>Shape</span></div>
<div class="a ly" style="top:128.69px"><span>Camps [20]</span></div>
<div class="a ly" style="top:147.26px"><span>Shape</span></div>
<div class="a ly" style="top:165.83px"><span>Shape</span></div>
<div class="a" style="left:165px;top:0;width:24.5px;height:175px;background:rgba(0,0,0,.02);border-left:.5px solid #2c2c2e"></div>
<div class="a" style="left:189.5px;top:0;width:7.5px;height:175px;background:#3c3c3e"></div>
<div class="a" style="left:190.5px;top:27px;width:6px;height:20px;border-radius:3px;background:#7c7c7c"></div>
</div>
<svg class="a" style="left:1172px;top:496.2px" width="14" height="10" viewBox="-7 -5 14 10"><path d="M-6.4 0C-4.6 -3 -2.4 -4.1 0 -4.1C2.4 -4.1 4.6 -3 6.4 0C4.6 3 2.4 4.1 0 4.1C-2.4 4.1 -4.6 3 -6.4 0Z" fill="#e8e8e8"/><circle r="2.7" fill="#353537"/><circle r="1.2" fill="#e8e8e8"/></svg>
<svg class="a" style="left:1172px;top:514.77px" width="14" height="10" viewBox="-7 -5 14 10"><path d="M-6.4 0C-4.6 -3 -2.4 -4.1 0 -4.1C2.4 -4.1 4.6 -3 6.4 0C4.6 3 2.4 4.1 0 4.1C-2.4 4.1 -4.6 3 -6.4 0Z" fill="#e8e8e8"/><circle r="2.7" fill="#353537"/><circle r="1.2" fill="#e8e8e8"/></svg>
<svg class="a" style="left:1172px;top:533.34px" width="14" height="10" viewBox="-7 -5 14 10"><path d="M-6.4 0C-4.6 -3 -2.4 -4.1 0 -4.1C2.4 -4.1 4.6 -3 6.4 0C4.6 3 2.4 4.1 0 4.1C-2.4 4.1 -4.6 3 -6.4 0Z" fill="#e8e8e8"/><circle r="2.7" fill="#353537"/><circle r="1.2" fill="#e8e8e8"/></svg>
<svg class="a" style="left:1172px;top:551.91px" width="14" height="10" viewBox="-7 -5 14 10"><path d="M-6.4 0C-4.6 -3 -2.4 -4.1 0 -4.1C2.4 -4.1 4.6 -3 6.4 0C4.6 3 2.4 4.1 0 4.1C-2.4 4.1 -4.6 3 -6.4 0Z" fill="#e8e8e8"/><circle r="2.7" fill="#353537"/><circle r="1.2" fill="#e8e8e8"/></svg>
<svg class="a" style="left:1172px;top:570.48px" width="14" height="10" viewBox="-7 -5 14 10"><path d="M-6.4 0C-4.6 -3 -2.4 -4.1 0 -4.1C2.4 -4.1 4.6 -3 6.4 0C4.6 3 2.4 4.1 0 4.1C-2.4 4.1 -4.6 3 -6.4 0Z" fill="#e8e8e8"/><circle r="2.7" fill="#353537"/><circle r="1.2" fill="#e8e8e8"/></svg>
<svg class="a" style="left:1172px;top:589.05px" width="14" height="10" viewBox="-7 -5 14 10"><path d="M-6.4 0C-4.6 -3 -2.4 -4.1 0 -4.1C2.4 -4.1 4.6 -3 6.4 0C4.6 3 2.4 4.1 0 4.1C-2.4 4.1 -4.6 3 -6.4 0Z" fill="#e8e8e8"/><circle r="2.7" fill="#353537"/><circle r="1.2" fill="#e8e8e8"/></svg>
<svg class="a" style="left:1172px;top:607.62px" width="14" height="10" viewBox="-7 -5 14 10"><path d="M-6.4 0C-4.6 -3 -2.4 -4.1 0 -4.1C2.4 -4.1 4.6 -3 6.4 0C4.6 3 2.4 4.1 0 4.1C-2.4 4.1 -4.6 3 -6.4 0Z" fill="#e8e8e8"/><circle r="2.7" fill="#353537"/><circle r="1.2" fill="#e8e8e8"/></svg>
<svg class="a" style="left:1172px;top:626.19px" width="14" height="10" viewBox="-7 -5 14 10"><path d="M-6.4 0C-4.6 -3 -2.4 -4.1 0 -4.1C2.4 -4.1 4.6 -3 6.4 0C4.6 3 2.4 4.1 0 4.1C-2.4 4.1 -4.6 3 -6.4 0Z" fill="#e8e8e8"/><circle r="2.7" fill="#353537"/><circle r="1.2" fill="#e8e8e8"/></svg>
<svg class="a" style="left:1172px;top:644.76px" width="14" height="10" viewBox="-7 -5 14 10"><path d="M-6.4 0C-4.6 -3 -2.4 -4.1 0 -4.1C2.4 -4.1 4.6 -3 6.4 0C4.6 3 2.4 4.1 0 4.1C-2.4 4.1 -4.6 3 -6.4 0Z" fill="#e8e8e8"/><circle r="2.7" fill="#353537"/><circle r="1.2" fill="#e8e8e8"/></svg>
<div class="a" style="left:1046px;top:496.2px;width:14px;height:9px;border:1px dashed #29292b"></div>
<div class="a" style="left:1045px;top:512.3100000000001px;width:16px;text-align:center;font-family:'Liberation Serif',serif;font-weight:bold;font-size:13px;line-height:14.95px;color:#e4e4e4">T</div>
<svg class="a" style="left:1045px;top:536.34px" width="16" height="4" viewBox="0 0 16 4"><path d="M1 2H10M12.5 2H15" stroke="#57a9cc" stroke-width="1.4"/></svg>
<div class="a" style="left:1045px;top:549.45px;width:16px;text-align:center;font-family:'Liberation Serif',serif;font-weight:bold;font-size:13px;line-height:14.95px;color:#e4e4e4">T</div>
<svg class="a" style="left:1045px;top:573.48px" width="16" height="4" viewBox="0 0 16 4"><path d="M1 2H15.5" stroke="#57a9cc" stroke-width="1.4"/></svg>
<svg class="a" style="left:1045px;top:588.05px" width="16" height="12" viewBox="0 0 16 12"><path d="M.5 1.6Q.5 .6 1.5 .6H5.2L6.6 2H14.5Q15.5 2 15.5 3V10.6Q15.5 11.5 14.5 11.5H1.5Q.5 11.5 .5 10.6Z" fill="#6f9ac0"/><path d="M.5 4H15.5V10.6Q15.5 11.5 14.5 11.5H1.5Q.5 11.5 .5 10.6Z" fill="#9fc0de"/></svg>
<svg class="a" style="left:1032.5px;top:590.05px" width="6" height="7" viewBox="0 0 6 7"><path d="M.5 .5L5 3.5L.5 6.5Z" fill="#141416"/></svg>
<div class="a" style="left:1045.5px;top:606.42px;width:15px;height:12.4px;background:#fff"></div>
<div class="a" style="left:1045px;top:623.7300000000001px;width:16px;text-align:center;font-family:'Liberation Serif',serif;font-weight:bold;font-size:13px;line-height:14.95px;color:#e4e4e4">T</div>
<div class="a" style="left:1046px;top:649.46px;width:14px;height:.7px;background:#262628"></div>
<div class="a" style="left:1003px;top:660px;width:190px;height:8.5px;overflow:hidden">
<div class="a" style="left:43px;top:3.4px;width:14px;height:9px;border:1px solid #262628"></div>
<svg class="a" style="left:169px;top:3.5px" width="14" height="10" viewBox="-7 -5 14 10"><path d="M-6.4 0C-4.6 -3 -2.4 -4.1 0 -4.1C2.4 -4.1 4.6 -3 6.4 0C4.6 3 2.4 4.1 0 4.1C-2.4 4.1 -4.6 3 -6.4 0Z" fill="#e8e8e8"/><circle r="2.7" fill="#353537"/><circle r="1.2" fill="#e8e8e8"/></svg>
</div>
<div class="a" style="left:1003px;top:668.5px;width:197px;height:49.5px;background:#343436;border-top:.5px solid #1c1c1e"></div>
<div class="a l" style="left:986.5px;top:681.5px;width:60px">Blending:</div>
<div class="a sel" style="left:1052px;top:678.5px;width:140px"><span>Normal</span><svg class="a" style="left:131.5px;top:1.5px" width="5" height="9" viewBox="0 0 5 9"><path d="M.6 3.6L2.5 1.2L4.4 3.6ZM.6 5.4L2.5 7.8L4.4 5.4Z" fill="#e0e0e0"/></svg></div>
<div class="a l" style="left:986.5px;top:700px;width:60px">Opacity:</div>
<div class="a" style="left:1052px;top:702.8px;width:110px;height:3px;border-radius:1.5px;background:#1a1a1c"></div>
<div class="a knob" style="left:1159px;top:700.3px"></div>
<div class="a" style="left:1172px;top:700px;font-weight:bold;font-size:7.5px;color:#e8e8e8">100%</div>
<div class="a" style="left:1003px;top:718px;width:197px;height:15px;background:linear-gradient(#444446,#3a3a3c);border-top:.5px solid #1c1c1e"></div>
<div class="a" style="left:1024.5px;top:718px;width:1px;height:15px;background:#262628"></div>
<div class="a" style="left:1046px;top:718px;width:1px;height:15px;background:#262628"></div>
<div class="a" style="left:1073px;top:718px;width:1px;height:15px;background:#262628"></div>
<svg class="a" style="left:1010.5px;top:722px" width="8" height="8" viewBox="0 0 8 8"><path d="M4 .6V7.4M.6 4H7.4" stroke="#f4f4f4" stroke-width="1.5"/></svg>
<svg class="a" style="left:1032px;top:722px" width="8" height="8" viewBox="0 0 8 8"><path d="M.8 4H7.2" stroke="#8a8a8a" stroke-width="1.3"/></svg>
<svg class="a" style="left:1051.5px;top:720.5px" width="10" height="10" viewBox="-5 -5 10 10"><circle r="3.3" fill="none" stroke="#ececec" stroke-width="2.2" stroke-dasharray="1.3 1.29"/><circle r="2.4" fill="none" stroke="#ececec" stroke-width="1.5"/></svg>
<svg class="a" style="left:1063.5px;top:724.5px" width="5" height="4" viewBox="0 0 5 4"><path d="M.3 .5H4.7L2.5 3.3Z" fill="#e0e0e0"/></svg><svg class="a" style="left:0;top:0;pointer-events:none" width="1200" height="733" viewBox="0 0 1200 733"><path d="M528.6 506.9L1026 537.6" stroke="#e0472c" stroke-width="1.8" fill="none"/><path d="M1035 538.2L1025 533.4L1025.2 542.4Z" fill="#e0472c"/></svg>

</div>
</body></html>
